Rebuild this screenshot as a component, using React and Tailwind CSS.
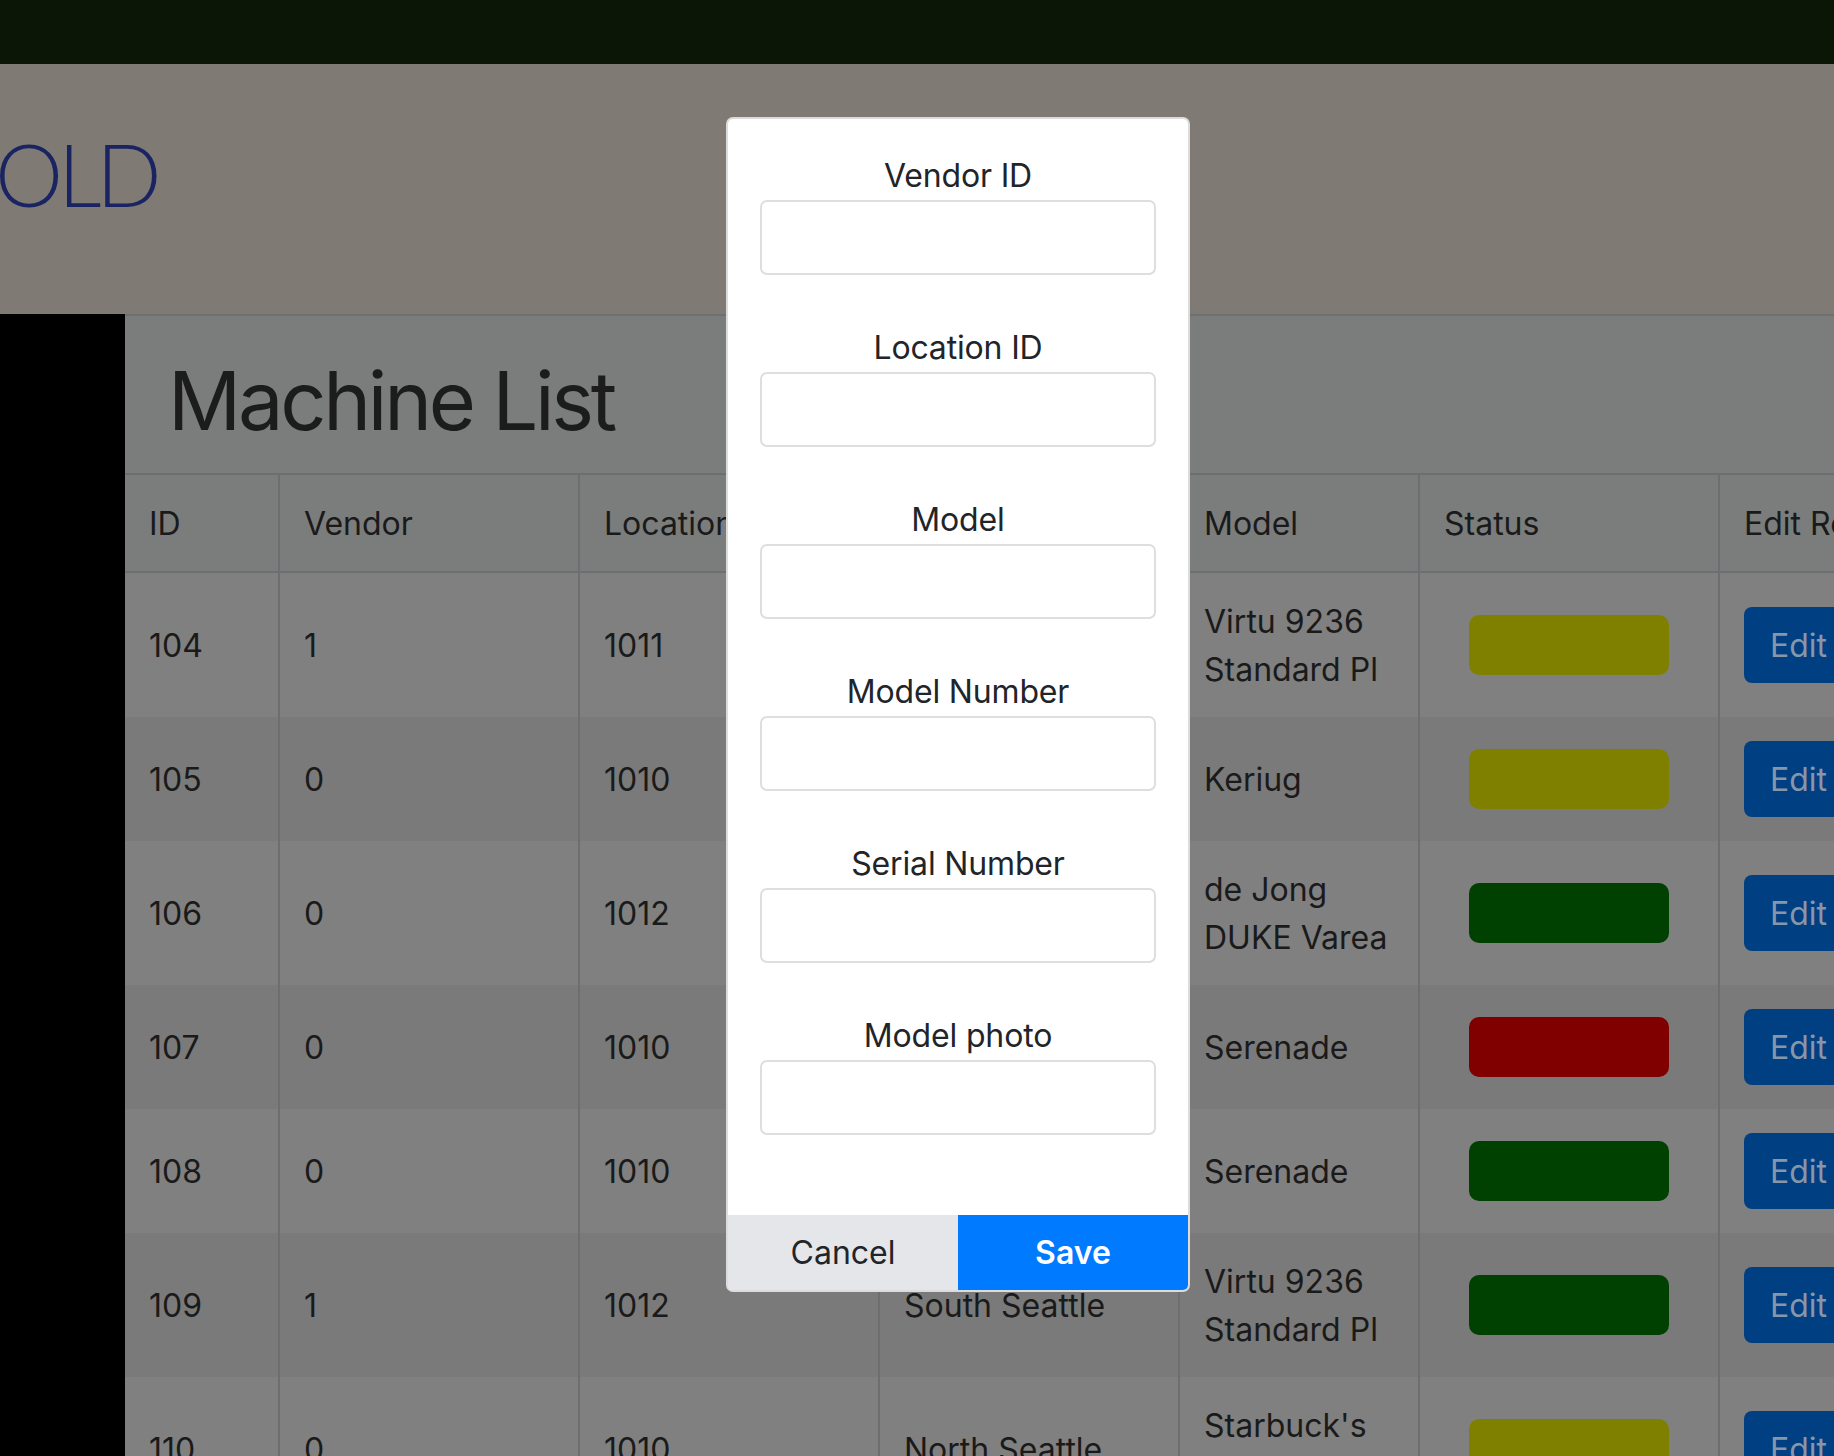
import React from 'react';

const places = { 1010: 'North Seattle', 1011: 'Downtown', 1012: 'South Seattle' };

const machines = [
  { id: 104, vendor: 1, location: 1011, model: ['Virtu 9236', 'Standard Pl'], status: 'yellow' },
  { id: 105, vendor: 0, location: 1010, model: ['Keriug'], status: 'yellow' },
  { id: 106, vendor: 0, location: 1012, model: ['de Jong', 'DUKE Varea'], status: 'green' },
  { id: 107, vendor: 0, location: 1010, model: ['Serenade'], status: 'red' },
  { id: 108, vendor: 0, location: 1010, model: ['Serenade'], status: 'green' },
  { id: 109, vendor: 1, location: 1012, model: ['Virtu 9236', 'Standard Pl'], status: 'green' },
  { id: 110, vendor: 0, location: 1010, model: ["Starbuck's", 'Mastrena'], status: 'yellow' },
];

const statusColor = {
  yellow: 'bg-[#808000]',
  green: 'bg-[#004000]',
  red: 'bg-[#800000]',
};

const fields = ['Vendor ID', 'Location ID', 'Model', 'Model Number', 'Serial Number', 'Model photo'];

const cols = 'grid w-max grid-cols-[153px_300px_300px_300px_240px_300px_260px]';
const cell = 'flex items-center px-[24px] border-l-2 border-[#6c6e71]';

function MachineRow({ m, index }) {
  return (
    <div className={`${cols} ${index % 2 === 0 ? 'bg-[#808080]' : 'bg-[#7a7a7a]'}`}>
      <div className="flex items-center px-[24px] pt-[25px] pb-[23px]">{m.id}</div>
      <div className={`${cell} pt-[1px]`}>{m.vendor}</div>
      <div className={`${cell} pt-[1px]`}>{m.location}</div>
      <div className={`${cell} pt-[1px]`}>{places[m.location]}</div>
      <div className={`${cell} pt-[25px] pb-[23px]`}>
        <div>
          {m.model.map((line) => (
            <div key={line}>{line}</div>
          ))}
        </div>
      </div>
      <div className={`${cell} justify-center`}>
        <span className={`block w-[200px] h-[60px] rounded-[10px] ${statusColor[m.status]}`} />
      </div>
      <div className={`${cell} py-[24px]`}>
        <button className="h-[76px] px-[26px] pt-[2px] rounded-[8px] bg-[#003f82] text-[#8797a9] leading-[48px]">
          Edit
        </button>
      </div>
    </div>
  );
}

function EditModal() {
  return (
    <div className="absolute left-[726px] top-[117px] w-[464px] bg-white border-2 border-[#dcdcdc] rounded-[7px] overflow-hidden text-[#212529]">
      <div className="flex flex-col gap-[49px] px-[32px] pt-[33px] pb-[80px]">
        {fields.map((label) => (
          <div key={label} className="flex flex-col">
            <label className="text-center leading-[48px] tracking-[-0.005em]">{label}</label>
            <div className="h-[75px] w-full border-2 border-[#dedede] rounded-[7px]" />
          </div>
        ))}
      </div>
      <div className="flex h-[75px]">
        <button className="flex-1 bg-[#e4e6ea] text-[#212529]">Cancel</button>
        <button className="flex-1 bg-[#007bff] text-white font-semibold">Save</button>
      </div>
    </div>
  );
}

export default function App() {
  return (
    <div className="relative w-full h-[1456px] overflow-hidden bg-[#7b7d7c] font-[Inter,sans-serif] text-[32px] leading-[48px] text-[#1a1a1a]">
      <div className="h-[64px] bg-[#0b1606]" />
      <header className="h-[250px] bg-[#7f7a73] flex items-center overflow-hidden">
        <span className="ml-[-5px] mt-[-30px] text-[86px] leading-none font-light font-[Lato,sans-serif] tracking-[-0.06em] text-[#1b2463]">
          OLD
        </span>
      </header>
      <div className="flex h-[1142px]">
        <aside className="w-[125px] shrink-0 bg-black" />
        <main className="flex-1 min-w-0 overflow-hidden border-t-2 border-[#6e6f70]">
          <h1 className="pl-[43px] pt-[35px] pb-[21px] text-[81px] leading-[101px] tracking-[-0.04em] text-[#1c1c1c]">
            Machine List
          </h1>
          <div className={`${cols} border-y-2 border-[#6c6e71]`}>
            <div className="px-[24px] pt-[25px] pb-[23px]">ID</div>
            <div className={`${cell} pt-[1px]`}>Vendor</div>
            <div className={`${cell} pt-[1px]`}>Location</div>
            <div className={`${cell} pt-[1px]`}>Location Name</div>
            <div className={`${cell} pt-[1px]`}>Model</div>
            <div className={`${cell} pt-[1px]`}>Status</div>
            <div className={`${cell} pt-[1px]`}>Edit Record</div>
          </div>
          {machines.map((m, i) => (
            <MachineRow key={m.id} m={m} index={i} />
          ))}
        </main>
      </div>
      <EditModal />
    </div>
  );
}
